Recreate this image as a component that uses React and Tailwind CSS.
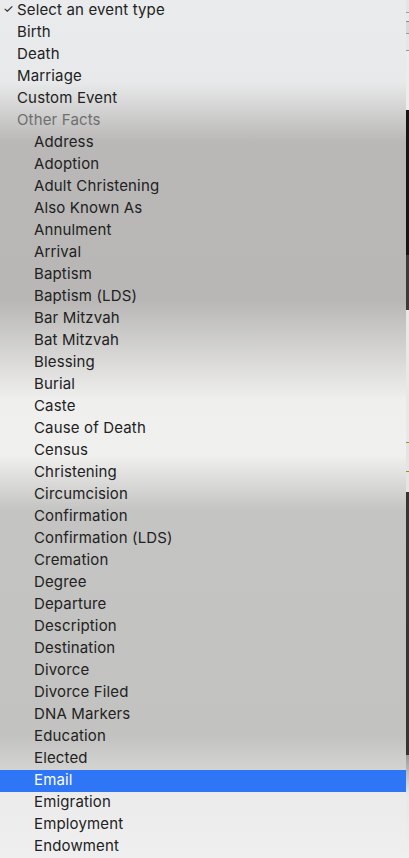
import React from "react";

const top = ["Birth", "Death", "Marriage", "Custom Event"];
const facts = [
  "Address", "Adoption", "Adult Christening", "Also Known As", "Annulment", "Arrival",
  "Baptism", "Baptism (LDS)", "Bar Mitzvah", "Bat Mitzvah", "Blessing", "Burial", "Caste",
  "Cause of Death", "Census", "Christening", "Circumcision", "Confirmation",
  "Confirmation (LDS)", "Cremation", "Degree", "Departure", "Description", "Destination",
  "Divorce", "Divorce Filed", "DNA Markers", "Education", "Elected", "Email", "Emigration",
  "Employment", "Endowment",
];

const font = { fontFamily: "Inter, 'Liberation Sans', sans-serif" };

export default function App() {
  return (
    <div className="flex w-[409px] h-[858px] overflow-hidden" style={font}>
      <div className="w-[406px] h-full flex flex-col bg-[linear-gradient(to_bottom,#e9ebec_0px,#e8e9ea_82px,#b9b8b6_142px,#b8b7b5_300px,#efefee_400px,#f0f0ef_455px,#c4c4c2_510px,#c2c2c0_735px,#d2d2d1_768px,#ebebeb_792px,#efefef_858px)] text-[15px] font-normal tracking-[0.15px] leading-[22px] text-[#222]">
        <div className="h-[22px] relative">
          <span className="absolute left-[3px] top-[-2px] text-[12px]">✓</span>
          <span className="pl-[17px] relative -top-[1px]">Select an event type</span>
        </div>
        {top.map((t) => (
          <div key={t} className="h-[22px] pl-[17px]"><span className="relative -top-[1px]">{t}</span></div>
        ))}
        <div className="h-[22px] pl-[17px] text-[#6f6f6f]"><span className="relative -top-[1px]">Other Facts</span></div>
        {facts.map((t) =>
          t === "Email" ? (
            <div key={t} className="h-[22px] pl-[34px] bg-[#2e76f6] text-white"><span className="relative -top-[1px]">{t}</span></div>
          ) : (
            <div key={t} className="h-[22px] pl-[34px]"><span className="relative -top-[1px]">{t}</span></div>
          )
        )}
      </div>
      <div className="w-[3px] h-full flex flex-col">
        <div className="h-[12px] bg-[#e4e4e4]" />
        <div className="h-[1px] bg-[#9a9a9a]" />
        <div className="h-[8px] bg-[#e8e8e8]" />
        <div className="h-[1px] bg-[#888]" />
        <div className="h-[11px] bg-[#d8d8d8]" />
        <div className="h-[1px] bg-[#999]" />
        <div className="h-[16px] bg-[#e6e6e6]" />
        <div className="h-[1px] bg-[#999]" />
        <div className="h-[59px] bg-[#ececec]" />
        <div className="h-[145px] bg-[#151515]" />
        <div className="h-[55px] bg-[#3a3a3a]" />
        <div className="h-[132px] bg-[#e8e8e8]" />
        <div className="h-[1px] bg-[#8a9a20]" />
        <div className="h-[28px] bg-[#e4e4e4]" />
        <div className="h-[1px] bg-[#8a9a20]" />
        <div className="h-[20px] bg-[#e4e4e4]" />
        <div className="h-[263px] bg-[#343434]" />
        <div className="flex-1 bg-[linear-gradient(to_bottom,#9a9a9a,#e8e8e8_40px,#efefef)]" />
      </div>
    </div>
  );
}
